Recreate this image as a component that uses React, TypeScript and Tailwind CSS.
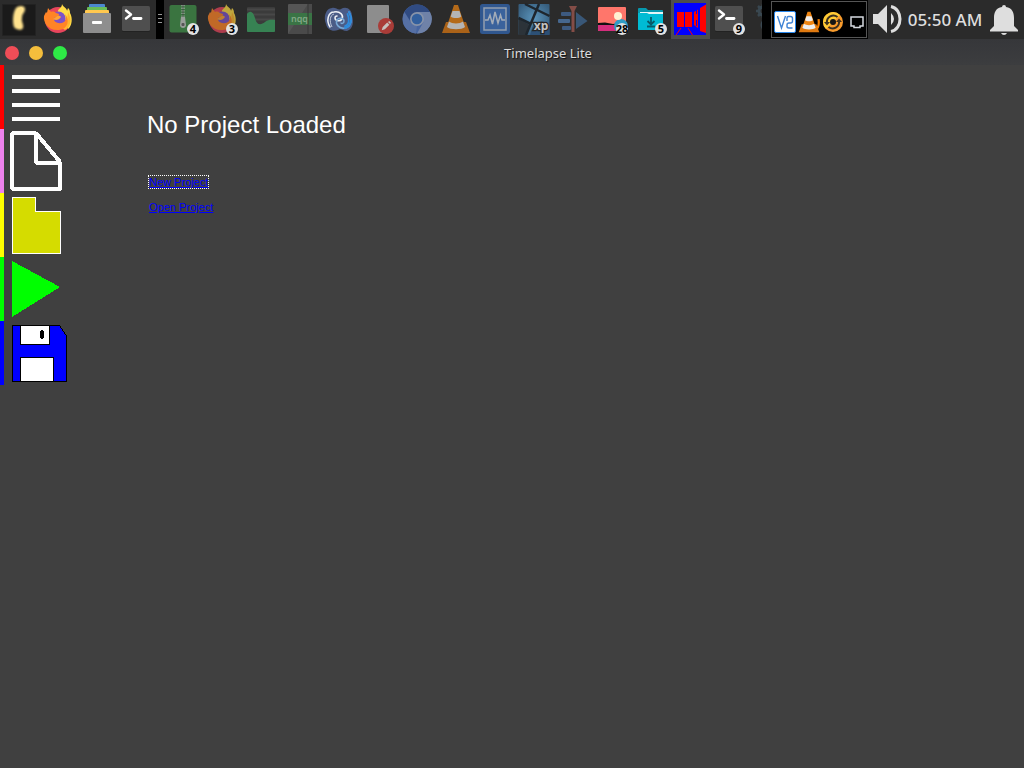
import React from 'react';

type IconProps = { children: React.ReactNode; dim?: boolean };

function Glyph({ children, dim }: IconProps) {
  return (
    <svg viewBox="0 0 39 39" className={dim ? 'size-[39px] opacity-70' : 'size-[39px]'} aria-hidden="true">
      {children}
    </svg>
  );
}

type TaskProps = { label: string; count?: number; dim?: boolean; active?: boolean; children: React.ReactNode };

function Task({ label, count, dim, active, children }: TaskProps) {
  return (
    <button
      type="button"
      aria-label={label}
      className={active ? 'relative size-[39px] shrink-0 bg-[#4d4d4d]' : 'relative size-[39px] shrink-0'}
    >
      <Glyph dim={dim}>{children}</Glyph>
      {count !== undefined && (
        <span className="absolute right-1 bottom-1 flex size-3 items-center justify-center rounded-full bg-[#e2e2e2] font-['Noto_Sans',sans-serif] text-[11px] leading-3 font-bold text-black">
          {count}
        </span>
      )}
    </button>
  );
}

function Firefox() {
  return (
    <>
      <circle cx="19" cy="20" r="13" fill="#e8455c" />
      <path d="M23 4 C23 9 18 8 19 13 L28 21 L29 29 C33 26 34 18 31 13 C31 10 30 9 29 8 L28 11 C28 8 24 7 23 4Z" fill="#ffdc45" />
      <path d="M29 12 C33 19 32 27 26 30 L20 26 L28 20Z" fill="#ffb52e" />
      <circle cx="19.500" cy="18.500" r="7" fill="#7d52c7" />
      <path d="M9 8 L12 12 C14 11 16 12 17 13 L20 14 C20 17 17 17 15 18 C14 22 20 25 25 22 C28 20 27 17 26 14 C31 20 29 29 20 30 C9 31 4 22 5 16 L7 12 L8 13Z" fill="#ff8426" />
      <path d="M17 17 C19 16 20 15 22 17 C20 20 17 21 14 19Z" fill="#ffa436" />
    </>
  );
}

function Terminal() {
  return (
    <>
      <rect x="5" y="7" width="28" height="25" rx="1.500" fill="#222" />
      <rect x="5" y="6" width="28" height="25" rx="1.500" fill="#4f4f4f" />
      <path d="M9 10.500 L14 14.500 L9 18.500" fill="none" stroke="#fff" strokeWidth="2.400" strokeLinecap="round" strokeLinejoin="round" />
      <path d="M16.500 18.500 H24" stroke="#fff" strokeWidth="2.800" strokeLinecap="round" />
    </>
  );
}

function Cone() {
  return (
    <>
      <path d="M9 22 H29 L33 33 H5Z" fill="#e07a10" />
      <path d="M17 5 H21 L28 26 C25 30 13 30 10 26Z" fill="#ee8512" />
      <path d="M15.500 11 H22.500 L24.300 16.500 C22 18.500 16 18.500 13.700 16.500Z" fill="#eee" />
      <path d="M12 21.500 C15 24 23 24 26 21.500 L28 27 C25 30 13 30 10 27Z" fill="#eee" />
    </>
  );
}

function TaskBar() {
  return (
    <header className="flex h-[39px] w-full items-stretch bg-[#2b2b2b]">
      <nav aria-label="Launchers" className="flex shrink-0">
        <Task label="Start">
          <defs>
            <filter id="glow" x="-30%" y="-30%" width="160%" height="160%">
              <feGaussianBlur stdDeviation="1" />
            </filter>
          </defs>
          <rect x="2" y="4" width="34" height="32" rx="1" fill="#222" />
          <rect x="3" y="5" width="32" height="30" fill="#1a1a1a" />
          <path d="M17 7 C21 5 25 6 25 9 C25 13 22 13 22 18 C21 22 24 24 23 28 C22 31 16 30 14 27 C12 22 13 10 17 7Z" fill="#ffe28d" filter="url(#glow)" />
          <path d="M18 9 C20 7 23 7 23 9 C23 12 20 13 20 18 C19 23 21 24 21 26 C20 28 17 28 16 25 C14 20 16 11 18 9Z" fill="#ffe28d" />
        </Task>
        <Task label="Firefox">
          <Firefox />
        </Task>
        <Task label="Files">
          <rect x="11" y="4" width="16" height="4" rx="1" fill="#4b88cf" />
          <rect x="9" y="7" width="20" height="4" rx="1" fill="#69bd58" />
          <rect x="7" y="10" width="24" height="4" rx="1" fill="#ffc84f" />
          <rect x="5" y="13" width="28" height="20" rx="1" fill="#8e8e8e" />
          <rect x="14" y="21" width="10" height="3" rx="1" fill="#fff" />
        </Task>
        <Task label="Terminal">
          <Terminal />
        </Task>
      </nav>
      <div className="flex w-2 shrink-0 flex-col items-center gap-[3px] bg-black pt-3.5">
        <span className="h-px w-1 bg-[#999]" />
        <span className="h-px w-1 bg-[#999]" />
        <span className="h-px w-1 bg-[#999]" />
      </div>
      <nav aria-label="Open windows" className="flex min-w-0 flex-1 overflow-hidden">
        <Task label="Archive manager" count={4}>
          <rect x="5.500" y="5" width="27" height="27.500" rx="2" fill="#3a7440" />
          <path d="M19 5 V17" stroke="#b5bdb5" strokeWidth="3" strokeDasharray="1.300 1.300" />
          <path d="M19 5 V17" stroke="#3a4a3c" strokeWidth="1" />
          <path d="M17 17 H21 L22 25 C22 29 16 29 16 25Z" fill="#999e99" />
          <rect x="17.500" y="23" width="3" height="3" rx="1" fill="#555" />
        </Task>
        <Task label="Firefox windows" count={3} dim>
          <Firefox />
        </Task>
        <Task label="System monitor">
          <rect x="5" y="7" width="28" height="25" rx="1" fill="#3b3b3b" />
          <path d="M5 9.500 H33 M5 14.500 H33 M5 19.500 H33" stroke="#484848" strokeWidth="2" />
          <path d="M5 14 C8 10 11 11 13 18 C15 26 19 25 23 22 C27 19 30 20 33 20 V31 Q33 32 32 32 H6 Q5 32 5 31Z" fill="#378253" />
        </Task>
        <Task label="Notepadqq">
          <rect x="7" y="4" width="24" height="30" rx="1" fill="#555" />
          <path d="M7 34 L27 4 H31 V34Z" fill="#4a4a4a" />
          <rect x="7" y="13" width="24" height="12" fill="#3a7445" />
          <path d="M27 4 V34" stroke="#363636" />
          <text x="18.500" y="22" textAnchor="middle" fontSize="9" fontWeight="600" fontFamily="Noto Sans, sans-serif" fill="#82a886">nqq</text>
        </Task>
        <Task label="Waves">
          <path d="M12 8 C16 7 18 11 21 9 C26 6 32 9 32 16 C34 22 33 29 27 31 C22 31 21 28 18 30 C13 32 7 30 6 24 C3 17 6 8 12 8Z" fill="#4b5c87" />
          <path d="M10 27 C6 21 8 12 14 12 C20 11 24 15 22 19 C20 22 15 21 15 18 C15 17 16 16 17 16" fill="none" stroke="#eef1f6" strokeWidth="1.500" strokeLinecap="round" />
          <path d="M12 27 C9 21 10 15 14 14" fill="none" stroke="#dde3ee" strokeWidth="0.800" />
          <path d="M29 12 C33 19 31 27 25 28 C19 29 15 24 17 20 C19 17 24 18 24 21 C24 23 22 24 21 23" fill="none" stroke="#78a9d8" strokeWidth="1.500" strokeLinecap="round" />
          <path d="M29 12 C33 19 31 27 25 28 M27.500 14 C30 20 29 25 25 26" fill="none" stroke="#2d8bdd" strokeWidth="1.800" strokeLinecap="round" />
        </Task>
        <Task label="Text editor">
          <rect x="8" y="5" width="22" height="28" rx="1" fill="#8d8d8d" />
          <circle cx="27" cy="26" r="8" fill="#a93c38" />
          <path d="M22.700 30.200 L23.700 27 L28.200 22.500 L30.400 24.700 L25.900 29.200Z M29 21.900 L30.200 21 L32 22.800 L31 24Z" fill="#c6c1be" />
        </Task>
        <Task label="Chromium">
          <circle cx="19" cy="19" r="14.500" fill="#4665a1" />
          <path d="M19 12 H32 A14.500 14.500 0 0 1 19 33.500 L25.500 22Z" fill="#6f82a8" />
          <path d="M6.500 12 L13 23 L19 26 L18 33.500 A14.500 14.500 0 0 1 6.500 12Z" fill="#5670a4" />
          <path d="M6.500 12 A14.500 14.500 0 0 1 32 12 H19 L13 22Z" fill="#304b82" />
          <circle cx="19" cy="19" r="7" fill="#8793a9" />
          <circle cx="19" cy="19" r="5.300" fill="#315f9e" />
        </Task>
        <Task label="VLC" dim>
          <Cone />
        </Task>
        <Task label="Activity monitor">
          <rect x="4" y="4" width="30" height="30" rx="2.500" fill="#30578f" />
          <rect x="8" y="8" width="22" height="22" fill="#3a629c" stroke="#929fae" strokeWidth="1.500" />
          <path d="M9 20 H12 L14 15 L16.500 24 L19 12 L22 23 L24.500 15 L26 20 H29" fill="none" stroke="#a3acb8" strokeWidth="1.500" />
        </Task>
        <Task label="XP viewer">
          <defs>
            <radialGradient id="sky" cx="50%" cy="45%" r="60%">
              <stop offset="0%" stopColor="#5b95bb" />
              <stop offset="100%" stopColor="#365d7d" />
            </radialGradient>
          </defs>
          <rect x="3.500" y="4" width="31" height="31" rx="1" fill="url(#sky)" />
          <path d="M3.500 19 L15 25 L12 35 H3.500Z" fill="#2c3339" />
          <path d="M24 4 L11 35" stroke="#1e262d" strokeWidth="2.500" />
          <path d="M3.500 18 L16 24 M10 4 L34.500 16" stroke="#1e262d" strokeWidth="2.500" />
          <path d="M19 22 L34.500 30 V35 H15Z" fill="#2c5076" />
          <text x="26" y="30" textAnchor="middle" fontSize="12" fontWeight="700" fontFamily="Noto Sans, sans-serif" fill="#c3c3c3" stroke="#252525" strokeWidth="2.500" paintOrder="stroke">xp</text>
        </Task>
        <Task label="Video editor">
          <rect x="7" y="12" width="10" height="4" rx="1" fill="#3d5a80" />
          <rect x="4" y="19" width="12" height="4" rx="1" fill="#46678e" />
          <rect x="8" y="26" width="9" height="4" rx="1" fill="#3d5a80" />
          <path d="M22 12 L33.500 21 L22 29Z" fill="#395777" />
          <path d="M15 6 H23 L20.500 11 V32 H17.500 V11Z" fill="#844d47" />
        </Task>
        <Task label="Image viewer" count={28}>
          <rect x="5" y="7" width="28" height="24" rx="1" fill="#ff766b" />
          <path d="M5 24 H33 V30 Q33 31 32 31 H6 Q5 31 5 30Z" fill="#d42e7d" />
          <path d="M5 23 L12 22.500 L20 24 L33 22 V25 H5Z" fill="#111" />
          <circle cx="28" cy="26" r="7" fill="#319bc5" />
          <circle cx="25" cy="16" r="4" fill="#fff1d2" />
        </Task>
        <Task label="Downloads" count={5}>
          <path d="M6 9 Q6 8 7 8 H14 L16 10 H30 Q31 10 31 11 V29 Q31 30 30 30 H7 Q6 30 6 29Z" fill="#0798ad" />
          <rect x="8" y="12" width="23" height="4" fill="#e5f7f9" />
          <path d="M6 13 H15 L17 14 H31 V29 Q31 30 30 30 H7 Q6 30 6 29Z" fill="#00bcd4" />
          <path d="M19 17 V24 M15.500 21 L19 24.500 L22.500 21 M15 26.500 H23" fill="none" stroke="#075a68" strokeWidth="1.800" />
        </Task>
        <Task label="Timelapse Lite" active>
          <rect x="3" y="3" width="32" height="32" fill="#0000ff" />
          <path d="M6 12 H13 V27 H6Z M14 12 H21 V27 H14Z M23 12 L27 9.500 V28 L23 25Z M29 8 L35 4.500 V33 L29 31Z" fill="#ff0000" />
          <path d="M10 28 L5 35 M17 28 L21.500 35" stroke="#ff0000" />
          <path d="M25.500 10 V14 M25.500 20 V26" stroke="#0000ff" />
        </Task>
        <Task label="Terminal windows" count={9}>
          <Terminal />
        </Task>
        <Task label="Settings">
          <g fill="none" stroke="#394750" strokeWidth="3">
            <circle cx="14" cy="11" r="4" />
            <circle cx="18" cy="25" r="5" />
          </g>
          <path d="M14 4 V18 M7 11 H21 M9 6 L19 16 M9 16 L19 6" stroke="#394750" strokeWidth="2.500" />
          <circle cx="14" cy="11" r="2.500" fill="#2b2b2b" />
        </Task>
      </nav>
      <div className="flex w-[106px] shrink-0 bg-black py-px pr-px pl-[9px]">
        <div className="flex flex-1 items-center gap-0.5 border border-[#555] px-0.5 pt-1">
          <button type="button" aria-label="VNC server">
            <svg viewBox="0 0 22 22" className="size-[22px]" aria-hidden="true">
              <rect x="0.500" y="0.500" width="21" height="21" rx="1.500" fill="#fff" stroke="#2887ec" />
              <path d="M3.500 5 L7.500 17 L11.500 5" fill="none" stroke="#3f83d5" strokeWidth="1.400" />
              <path d="M13 10 V7 Q13 5.500 14.500 5.500 H16.500 Q18.500 5.500 18.500 7.500 V10 Q18.500 12 16.500 12 H15 Q13 12 13 14 V15.500 Q13 17 15 17 H18.500" fill="none" stroke="#3f83d5" strokeWidth="1.400" />
            </svg>
          </button>
          <button type="button" aria-label="VLC player">
            <svg viewBox="4 4 30 30" className="size-[22px]" aria-hidden="true">
              <path d="M25 30 Q34 29 32 15" fill="none" stroke="#f57e00" strokeWidth="3" />
              <Cone />
            </svg>
          </button>
          <button type="button" aria-label="Updates">
            <svg viewBox="0 0 22 22" className="size-[22px]" aria-hidden="true">
              <circle cx="11" cy="11" r="10" fill="#f89b2c" />
              <path d="M1 11 A10 10 0 0 1 18 4 L4 18 Q1 15 1 11Z" fill="#ffcb35" />
              <circle cx="11" cy="11" r="3" fill="#151515" />
              <path d="M5 12 A6.500 6.500 0 0 1 15.500 6 M17 10 A6.500 6.500 0 0 1 6.500 16" fill="none" stroke="#3b3020" strokeWidth="2" />
              <path d="M2 11 H8 L5 14.500Z M20 11 H14 L17 7.500Z" fill="#3b3020" />
            </svg>
          </button>
          <button type="button" aria-label="Network" className="pl-1">
            <svg viewBox="0 0 14 14" className="size-3.5" aria-hidden="true">
              <path d="M1 2 H13 V11 H10 V12.500 H4 V11 H1Z" fill="none" stroke="#d5d9df" strokeWidth="1.500" />
            </svg>
          </button>
        </div>
      </div>
      <div className="flex shrink-0 items-center">
        <button type="button" aria-label="Volume" className="size-[39px]">
          <Glyph>
            <path d="M5 14 H10 L19 5 V33 L10 24 H5Z" fill="#dedede" />
            <path d="M23 13 Q29 19 23 25Z" fill="#dedede" />
            <path d="M23 6.500 C35 9 35 29 23 31.500" fill="none" stroke="#dedede" strokeWidth="3" />
          </Glyph>
        </button>
        <time className="w-[78px] pr-0.5 text-center font-['Noto_Sans',sans-serif] text-[17px] leading-6 font-medium whitespace-nowrap text-[#dedede]">
          05:50 AM
        </time>
        <button type="button" aria-label="Notifications" className="size-[39px]">
          <Glyph>
            <path d="M17 7 Q17 5 19 5 Q21 5 21 7 C27 8 29 12 29 18 V26 L33 30 V31.500 H5 V30 L9 26 V18 C9 12 11 8 17 7Z M16 33 H22 Q21 35 19 35 Q17 35 16 33Z" fill="#dedede" />
          </Glyph>
        </button>
      </div>
    </header>
  );
}

function TitleBar() {
  return (
    <div className="grid h-[26px] grid-cols-[72px_1fr] items-center bg-linear-to-b from-[#36373a] to-[#3c3d3f]">
      <div className="flex gap-2.5 pt-0.5 pl-[5px]">
        <button type="button" aria-label="Close" className="size-3.5 rounded-full bg-[#f04d57]" />
        <button type="button" aria-label="Minimize" className="size-3.5 rounded-full bg-[#f5be3c]" />
        <button type="button" aria-label="Maximize" className="size-3.5 rounded-full bg-[#2ee946]" />
      </div>
      <h1 className="pt-0.5 text-center font-['Noto_Sans',sans-serif] text-[13px] leading-5 text-[#dcdcdc] [text-shadow:1px_1px_1px_#111]">
        Timelapse Lite
      </h1>
    </div>
  );
}

const tools = [
  {
    label: 'Menu',
    strip: 'border-[#ff0000]',
    art: <path d="M8 10 H56 V14 H8Z M8 24 H56 V28 H8Z M8 38 H56 V42 H8Z M8 52 H56 V56 H8Z" fill="#fff" />,
  },
  {
    label: 'New project',
    strip: 'border-[#ee82ee]',
    art: <path d="M32 4 H8 V60 H56 V34 H32 V4 L56 33" fill="none" stroke="#fff" strokeWidth="4" strokeLinejoin="bevel" />,
  },
  {
    label: 'Open project',
    strip: 'border-[#ffff00]',
    art: <path d="M8.500 4.500 H31.500 V18.500 H56.500 V60.500 H8.500Z" fill="#d5dc00" stroke="#fff" />,
  },
  {
    label: 'Run',
    strip: 'border-[#00ff00]',
    art: <path d="M8 4 L56 30 L8 60Z" fill="#00ff00" />,
  },
  {
    label: 'Save',
    strip: 'border-[#0000ff]',
    art: (
      <>
        <path d="M8.500 4.500 H55.500 L62.500 15 V60.500 H8.500Z" fill="#0000ff" stroke="#000" />
        <rect x="16.500" y="4.500" width="29" height="19" fill="#fff" stroke="#000" />
        <path d="M37 9 H39 V10 H40 V17 H39 V18 H37 V17 H36 V10 H37Z" fill="#000" />
        <rect x="16.500" y="36.500" width="33" height="24" fill="#fff" stroke="#000" />
      </>
    ),
  },
];

export default function App() {
  return (
    <div className="flex min-h-screen flex-col bg-[#404040] font-['Liberation_Sans',Arial,sans-serif]">
      <TaskBar />
      <TitleBar />
      <div className="flex flex-1">
        <aside aria-label="Project tools" className="flex w-[68px] shrink-0 flex-col">
          {tools.map((tool) => (
            <button key={tool.label} type="button" aria-label={tool.label} className={`h-16 border-l-4 ${tool.strip}`}>
              <svg viewBox="0 0 64 64" className="size-16" shapeRendering="crispEdges" aria-hidden="true">
                {tool.art}
              </svg>
            </button>
          ))}
        </aside>
        <main className="flex flex-col items-start pt-[46px] pl-[79px]">
          <h2 className="text-2xl leading-7 text-white">No Project Loaded</h2>
          <div className="mt-9 flex flex-col items-start gap-3 pl-px text-[11px] leading-3 text-[#0000ff] underline">
            <a href="#new" className="border border-dotted border-white">
              New Project
            </a>
            <a href="#open" className="px-px">
              Open Project
            </a>
          </div>
        </main>
      </div>
    </div>
  );
}
